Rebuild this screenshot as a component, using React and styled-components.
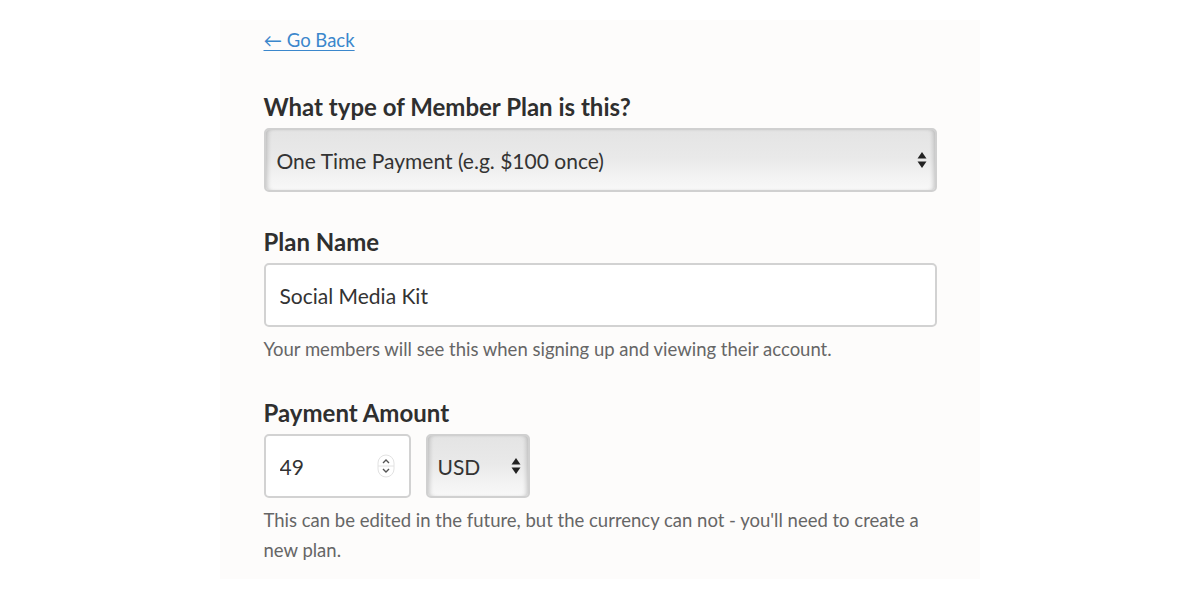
import React, { useState } from 'react'
import styled, { createGlobalStyle } from 'styled-components'

const GlobalStyle = createGlobalStyle`
  body {
    margin: 0;
    background: #ffffff;
    font-family: Lato, "Open Sans", "Liberation Sans", sans-serif;
  }
`

const Page = styled.div`
  display: flex;
  justify-content: center;
  padding-top: 20px;
`

const Panel = styled.div`
  width: 760px;
  box-sizing: border-box;
  margin-left: -1px;
  padding: 5px 43px 14px 44px;
  background: #fdfcfb;
`

const BackLink = styled.a`
  display: inline-block;
  font-size: 18.5px;
  line-height: 30px;
  color: #3b87cc;
  text-decoration: underline;
  text-underline-offset: 3px;
  text-decoration-thickness: 1px;
`

const Field = styled.div`
  margin-top: ${p => p.$top}px;
`

const Label = styled.label`
  display: block;
  font-size: 24px;
  font-weight: 700;
  line-height: 30px;
  color: #2f2f2f;
  margin-bottom: 6px;
`

const SelectWrap = styled.div`
  position: relative;
  width: ${p => p.$width};
  height: 64px;
`

const Select = styled.select`
  appearance: none;
  -webkit-appearance: none;
  width: 100%;
  height: 100%;
  box-sizing: border-box;
  border: 2px solid #d0d0d0;
  border-radius: 5px;
  padding: 0 ${p => p.$padRight}px 0 ${p => p.$padLeft}px;
  font-family: inherit;
  font-size: 21px;
  color: #333;
  background: linear-gradient(#e4e4e4 0%, #e9e9e9 45%, #f3f3f3 80%, #f8f8f8 100%);
  box-shadow: inset 4px 0 5px -3px rgba(0, 0, 0, 0.22),
    inset -4px 0 5px -3px rgba(0, 0, 0, 0.22);
  outline: none;
`

const SelectArrows = styled.svg`
  position: absolute;
  right: ${p => p.$right}px;
  top: 50%;
  margin-top: -9px;
  pointer-events: none;
`

const TextInput = styled.input`
  display: block;
  width: ${p => p.$width};
  height: 64px;
  box-sizing: border-box;
  border: 2px solid #d2d2d2;
  border-radius: 5px;
  padding: 0 0 0 14px;
  font-family: inherit;
  font-size: 21px;
  color: #333;
  background: #fff;
  outline: none;
`

const Help = styled.p`
  margin: 7px 0 0;
  font-size: 18.5px;
  line-height: 30px;
  color: #666;
`

const AmountRow = styled.div`
  display: flex;
  gap: 15px;
`

const NumberWrap = styled.div`
  position: relative;
  width: 147px;
`

const Spinner = styled.svg`
  position: absolute;
  right: 16px;
  top: 50%;
  margin-top: -12px;
  pointer-events: none;
`

const Arrows = ({ right }) => (
  <SelectArrows $right={right} width="10" height="18" viewBox="0 0 10 18">
    <path d="M5 1 L9.5 7.5 H0.5 Z" fill="#222" />
    <path d="M5 17 L9.5 10.5 H0.5 Z" fill="#222" />
  </SelectArrows>
)

const App = () => {
  const [plan, setPlan] = useState('Social Media Kit')
  const [amount, setAmount] = useState('49')

  return (
    <>
      <GlobalStyle />
      <Page>
        <Panel>
          <BackLink href="#">← Go Back</BackLink>

          <Field $top={37}>
            <Label>What type of Member Plan is this?</Label>
            <SelectWrap $width="100%">
              <Select $padLeft={11} $padRight={40} defaultValue="once">
                <option value="once">One Time Payment (e.g. $100 once)</option>
                <option value="recurring">Recurring Payment (e.g. $10 per month)</option>
              </Select>
              <Arrows right={10} />
            </SelectWrap>
          </Field>

          <Field $top={35}>
            <Label>Plan Name</Label>
            <TextInput
              $width="100%"
              value={plan}
              onChange={e => setPlan(e.target.value)}
            />
            <Help>Your members will see this when signing up and viewing their account.</Help>
          </Field>

          <Field $top={34}>
            <Label>Payment Amount</Label>
            <AmountRow>
              <NumberWrap>
                <TextInput
                  $width="100%"
                  value={amount}
                  onChange={e => setAmount(e.target.value)}
                />
                <Spinner width="18" height="24" viewBox="0 0 18 24">
                  <rect x="1" y="1" width="16" height="22" rx="8" fill="#fff" stroke="#e2e2e2" />
                  <line x1="1" y1="12" x2="17" y2="12" stroke="#e2e2e2" />
                  <path d="M6 9 L9 6 L12 9" fill="none" stroke="#555" strokeWidth="1.4" />
                  <path d="M6 15 L9 18 L12 15" fill="none" stroke="#555" strokeWidth="1.4" />
                </Spinner>
              </NumberWrap>
              <SelectWrap $width="104px">
                <Select $padLeft={10} $padRight={28} defaultValue="USD">
                  <option>USD</option>
                  <option>EUR</option>
                  <option>GBP</option>
                </Select>
                <Arrows right={9} />
              </SelectWrap>
            </AmountRow>
            <Help>
              This can be edited in the future, but the currency can not - you'll need to create a
              new plan.
            </Help>
          </Field>
        </Panel>
      </Page>
    </>
  )
}

export default App
